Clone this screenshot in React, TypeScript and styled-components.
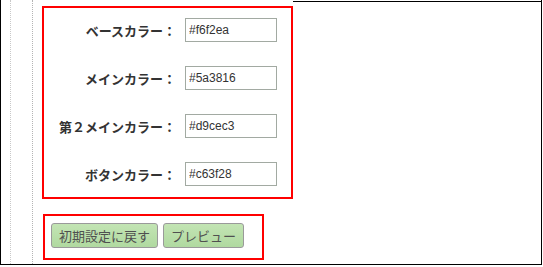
import React from 'react';
import styled, { createGlobalStyle } from 'styled-components';

interface ColorSetting {
  label: string;
  value: string;
}

const settings: ColorSetting[] = [
  { label: 'ベースカラー：', value: '#f6f2ea' },
  { label: 'メインカラー：', value: '#5a3816' },
  { label: '第２メインカラー：', value: '#d9cec3' },
  { label: 'ボタンカラー：', value: '#c63f28' },
];

const App: React.FC = () => {
  return (
    <>
      <GlobalStyle />
      <Frame>
        <Gutter />
        <Rail />
        <Content>
          <FormBox>
            {settings.map((s) => (
              <React.Fragment key={s.label}>
                <Label>{s.label}</Label>
                <ColorInput type="text" defaultValue={s.value} />
              </React.Fragment>
            ))}
          </FormBox>
          <ButtonBox>
            <ActionButton>初期設定に戻す</ActionButton>
            <ActionButton>プレビュー</ActionButton>
          </ButtonBox>
        </Content>
      </Frame>
    </>
  );
};

const GlobalStyle = createGlobalStyle`
  body {
    margin: 0;
    background: #fff;
    font-family: "Liberation Sans", "Noto Sans CJK JP", sans-serif;
  }
`;

const Frame = styled.div`
  position: relative;
  box-sizing: border-box;
  width: 542px;
  height: 265px;
  display: flex;
  border-left: 1px solid #000;
  border-right: 1px solid #000;
  border-bottom: 1px solid #000;

  &::before {
    content: '';
    position: absolute;
    top: 1px;
    left: 292px;
    right: 0;
    height: 1px;
    background: #000;
  }
`;

const Gutter = styled.div`
  width: 9px;
  border-right: 1px dotted #c9c9c9;
`;

const Rail = styled.div`
  width: 21px;
  border-right: 1px dotted #b4b4b4;
`;

const Content = styled.div`
  display: flex;
  flex-direction: column;
  align-items: flex-start;
  gap: 15px;
  padding: 6px 0 0 9px;
`;

const FormBox = styled.div`
  box-sizing: border-box;
  width: 251px;
  height: 193px;
  border: 2px solid #ff0000;
  display: grid;
  grid-template-columns: 132px 92px;
  column-gap: 9px;
  row-gap: 24px;
  align-items: center;
  padding: 10px 0 0 0;
  align-content: start;
`;

const Label = styled.span`
  text-align: right;
  font-size: 13px;
  font-weight: bold;
  color: #333;
  white-space: nowrap;
`;

const ColorInput = styled.input`
  box-sizing: border-box;
  width: 92px;
  height: 24px;
  margin: 0;
  padding: 0 3px;
  border: 1px solid #a2aaa2;
  background: #fff;
  font-family: "Liberation Sans", Arial, sans-serif;
  font-size: 12px;
  color: #333;
  outline: none;
`;

const ButtonBox = styled.div`
  box-sizing: border-box;
  width: 221px;
  height: 46px;
  margin-left: 1px;
  border: 2px solid #ff0000;
  display: flex;
  gap: 5px;
  padding: 7px 0 0 6px;
  align-items: flex-start;
`;

const ActionButton = styled.button`
  box-sizing: border-box;
  height: 25px;
  margin: 0;
  padding: 0 7px;
  border: 1px solid #9a9a9a;
  border-radius: 3px;
  background: linear-gradient(#c3e5b4, #b0d9a0);
  font-family: "Liberation Sans", "Noto Sans CJK JP", sans-serif;
  font-size: 13px;
  color: #505050;
  cursor: pointer;
`;

export default App;
